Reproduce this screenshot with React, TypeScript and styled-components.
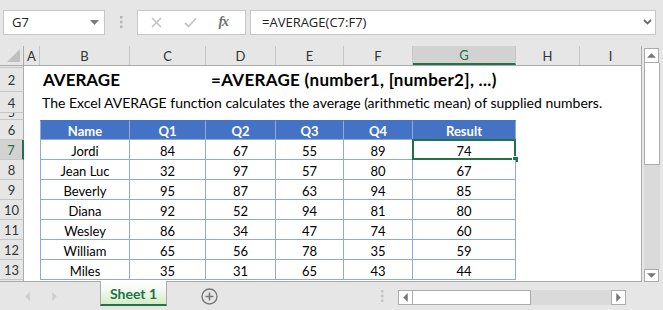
import styled, { createGlobalStyle } from "styled-components";

const GlobalStyle = createGlobalStyle`
  html, body {
    margin: 0;
    padding: 0;
    background: #e6e6e6;
  }
`;

const COLS = "24px 16px 90px 76px 70px 68px 69px 103px 64px 62px";
const LETTERS = ["A", "B", "C", "D", "E", "F", "G", "H", "I"];
const SHEET_FONT = `Lato, "Open Sans", sans-serif`;
const UI_FONT = `"Open Sans", "Noto Sans", sans-serif`;

const data = [
  { row: 7, name: "Jordi", q: [84, 67, 55, 89], res: 74 },
  { row: 8, name: "Jean Luc", q: [32, 97, 57, 80], res: 67 },
  { row: 9, name: "Beverly", q: [95, 87, 63, 94], res: 85 },
  { row: 10, name: "Diana", q: [92, 52, 94, 81], res: 80 },
  { row: 11, name: "Wesley", q: [86, 34, 47, 74], res: 60 },
  { row: 12, name: "William", q: [65, 56, 78, 35], res: 59 },
  { row: 13, name: "Miles", q: [35, 31, 65, 43], res: 44 },
];

const Window = styled.div`
  width: 663px;
  height: 310px;
  display: flex;
  flex-direction: column;
  background: #e6e6e6;
  overflow: hidden;
`;

/* formula bar */

const FormulaBar = styled.div`
  height: 46px;
  display: flex;
  align-items: center;
  padding: 0 7px 2px 3px;
  box-sizing: border-box;
  font-family: ${UI_FONT};
  font-size: 13px;
  color: #222;
`;

const InputBox = styled.div<{ $w?: number }>`
  height: 25px;
  box-sizing: border-box;
  background: #fff;
  border: 1px solid #c6c6c6;
  display: flex;
  align-items: center;
  ${(p) => (p.$w ? `width: ${p.$w}px;` : "flex: 1;")}
`;

const NameText = styled.span`
  flex: 1;
  padding-left: 8px;
`;

const Dots = styled.div`
  width: 32px;
  display: flex;
  justify-content: center;
`;

const FxGroup = styled.div`
  flex: 1;
  display: flex;
  justify-content: space-around;
  align-items: center;
  padding: 0 6px 0 2px;
`;

const Fx = styled.span`
  font-family: "Liberation Serif", serif;
  font-style: italic;
  font-weight: bold;
  font-size: 14px;
  color: #6f6f6f;
  letter-spacing: -1px;
`;

const FormulaText = styled.span`
  flex: 1;
  padding-left: 11px;
`;

const Gap = styled.div<{ $w: number }>`
  width: ${(p) => p.$w}px;
  flex: none;
`;

/* sheet grid */

const SheetArea = styled.div`
  display: flex;
  height: 236px;
`;

const Grid = styled.div`
  width: 642px;
  display: flex;
  flex-direction: column;
  background: #fff;
  border-right: 1px solid #ababab;
  border-bottom: 1px solid #ababab;
  box-sizing: border-box;
  font-family: ${SHEET_FONT};
  font-size: 13px;
  color: #000;
  overflow: hidden;
`;

const Row = styled.div<{ $h: number }>`
  display: grid;
  grid-template-columns: ${COLS};
  height: ${(p) => p.$h}px;
  flex: none;
`;

const HeaderRow = styled(Row)`
  background: #e6e6e6;
  border-bottom: 1px solid #ababab;
  box-sizing: border-box;
`;

const Corner = styled.div`
  border-right: 1px solid #ababab;
  display: flex;
  align-items: flex-end;
  justify-content: flex-end;
  padding: 0 3px 3px 0;
`;

const ColHead = styled.div<{ $active?: boolean }>`
  display: flex;
  align-items: center;
  justify-content: center;
  color: ${(p) => (p.$active ? "#217346" : "#333")};
  background: ${(p) => (p.$active ? "#d2d2d2" : "transparent")};
  border-right: 1px solid #c6c6c6;
  border-bottom: ${(p) => (p.$active ? "2px solid #217346" : "none")};
  box-sizing: border-box;
  padding-top: 1px;
`;

const RowHead = styled.div<{ $active?: boolean; $clip?: boolean }>`
  display: flex;
  align-items: ${(p) => (p.$clip ? "flex-end" : "center")};
  justify-content: center;
  overflow: hidden;
  line-height: ${(p) => (p.$clip ? "12px" : "normal")};
  font-size: ${(p) => (p.$clip ? "12px" : "13px")};
  background: ${(p) => (p.$active ? "#d2d2d2" : "#e6e6e6")};
  color: ${(p) => (p.$active ? "#217346" : "#333")};
  border-bottom: 1px solid #c6c6c6;
  border-right: ${(p) => (p.$active ? "2px solid #217346" : "1px solid #ababab")};
  box-sizing: border-box;
  padding-top: ${(p) => (p.$clip ? "0" : "1px")};
`;

const Blank = styled.div<{ $span?: number }>`
  grid-column: span ${(p) => p.$span ?? 1};
`;

const Title = styled.div<{ $span: number; $wide?: boolean }>`
  grid-column: span ${(p) => p.$span};
  font-size: 17px;
  font-weight: bold;
  line-height: 24px;
  padding-left: ${(p) => (p.$wide ? "5px" : "3px")};
  letter-spacing: ${(p) => (p.$wide ? "0.3px" : "0")};
  white-space: nowrap;
`;

const Description = styled.div<{ $span: number }>`
  grid-column: span ${(p) => p.$span};
  font-size: 14px;
  line-height: 21px;
  padding-left: 2px;
  white-space: nowrap;
`;

const TCell = styled.div<{ $head?: boolean; $first?: boolean }>`
  position: relative;
  display: flex;
  align-items: center;
  justify-content: center;
  padding-top: 2px;
  box-sizing: border-box;
  font-weight: ${(p) => (p.$head ? "bold" : "normal")};
  color: ${(p) => (p.$head ? "#fff" : "#000")};
  background: ${(p) => (p.$head ? "#4472c4" : "#fff")};
  border-right: 1px solid ${(p) => (p.$head ? "#8eaadb" : "#8ea9db")};
  border-bottom: 1px solid #8ea9db;
  border-top: ${(p) => (p.$head ? "1px solid #4472c4" : "none")};
  border-left: ${(p) => (p.$first ? "1px solid #8ea9db" : "none")};
`;

const Selection = styled.div`
  position: absolute;
  left: -1px;
  top: -1px;
  right: -1px;
  bottom: -1px;
  border: 2px solid #217346;
  pointer-events: none;
`;

const FillHandle = styled.div`
  position: absolute;
  right: -5px;
  bottom: -5px;
  width: 5px;
  height: 5px;
  background: #217346;
  border: 1px solid #fff;
`;

/* vertical scrollbar */

const VScroll = styled.div`
  width: 21px;
  display: flex;
  flex-direction: column;
  padding: 2px 3px 0 2px;
  box-sizing: border-box;
`;

const ScrollBtn = styled.div<{ $w?: number; $h?: number }>`
  width: ${(p) => p.$w ?? 15}px;
  height: ${(p) => p.$h ?? 15}px;
  flex: none;
  box-sizing: border-box;
  background: #fff;
  border: 1px solid #ababab;
  display: flex;
  align-items: center;
  justify-content: center;
`;

const VThumb = styled.div`
  height: 102px;
  flex: none;
  background: #fff;
  border: 1px solid #ababab;
  border-top: none;
  box-sizing: border-box;
`;

const VTrack = styled.div`
  flex: 1;
  background: #dadada;
`;

/* bottom bar */

const BottomBar = styled.div`
  flex: 1;
  display: flex;
  align-items: flex-start;
  font-family: ${SHEET_FONT};
`;

const NavArrows = styled.div`
  width: 100px;
  height: 28px;
  display: flex;
  align-items: center;
  padding-left: 25px;
  gap: 22px;
  box-sizing: border-box;
`;

const SheetTab = styled.div`
  width: 67px;
  height: 25px;
  margin-top: -1px;
  box-sizing: border-box;
  border-left: 1px solid #ababab;
  border-right: 1px solid #ababab;
  border-bottom: 2px solid #217346;
  background: linear-gradient(#ffffff, #f2f9ef 40%, #d3ecc8);
  color: #217346;
  font-weight: bold;
  font-size: 14px;
  display: flex;
  align-items: center;
  justify-content: center;
  padding-top: 1px;
`;

const AddSheet = styled.div`
  width: 84px;
  height: 28px;
  display: flex;
  align-items: center;
  justify-content: center;
`;

const HScrollDots = styled.div`
  width: 147px;
  height: 28px;
  display: flex;
  align-items: center;
  justify-content: flex-end;
  padding-right: 14px;
  box-sizing: border-box;
`;

const HScroll = styled.div`
  width: 228px;
  height: 15px;
  margin-top: 8px;
  display: flex;
  background: #dadada;
`;

const HThumb = styled.div`
  width: 118px;
  height: 15px;
  background: #fff;
  border: 1px solid #ababab;
  border-left: none;
  box-sizing: border-box;
`;

const HTrack = styled.div`
  flex: 1;
`;

const Tri = ({ dir, color = "#777" }: { dir: "up" | "down" | "left" | "right"; color?: string }) => {
  const pts = {
    up: "0,5 5,0 10,5",
    down: "0,0 10,0 5,5",
    left: "5,0 5,10 0,5",
    right: "0,0 0,10 5,5",
  }[dir];
  const vert = dir === "up" || dir === "down";
  return (
    <svg width={vert ? 9 : 5} height={vert ? 5 : 9} viewBox={vert ? "0 0 10 5" : "0 0 5 10"}>
      <polygon points={pts} fill={color} />
    </svg>
  );
};

const VDots = ({ color = "#b4b4b4" }: { color?: string }) => (
  <svg width="3" height="12" viewBox="0 0 3 12">
    <rect x="0" y="0" width="2.5" height="2.5" fill={color} />
    <rect x="0" y="4.75" width="2.5" height="2.5" fill={color} />
    <rect x="0" y="9.5" width="2.5" height="2.5" fill={color} />
  </svg>
);

const App = () => {
  return (
    <Window>
      <GlobalStyle />
      <FormulaBar>
        <InputBox $w={102}>
          <NameText>G7</NameText>
          <svg width="9" height="5" viewBox="0 0 9 5" style={{ marginRight: 5 }}>
            <polygon points="0,0 9,0 4.5,5" fill="#7b7b7b" />
          </svg>
        </InputBox>
        <Dots>
          <VDots />
        </Dots>
        <InputBox $w={109}>
          <FxGroup>
            <svg width="11" height="11" viewBox="0 0 11 11">
              <path d="M1 1 L10 10 M10 1 L1 10" stroke="#c4c4c4" strokeWidth="1.6" />
            </svg>
            <svg width="13" height="11" viewBox="0 0 13 11">
              <path d="M1 6 L4.5 9.5 L12 1.5" stroke="#c4c4c4" strokeWidth="1.8" fill="none" />
            </svg>
            <Fx>fx</Fx>
          </FxGroup>
        </InputBox>
        <Gap $w={4} />
        <InputBox>
          <FormulaText>=AVERAGE(C7:F7)</FormulaText>
          <svg width="9" height="6" viewBox="0 0 9 6" style={{ marginRight: 3 }}>
            <path d="M1 1 L4.5 4.5 L8 1" stroke="#6b6b6b" strokeWidth="1.8" fill="none" />
          </svg>
        </InputBox>
      </FormulaBar>

      <SheetArea>
        <Grid>
          <HeaderRow $h={20}>
            <Corner>
              <svg width="13" height="13" viewBox="0 0 13 13">
                <polygon points="13,0 13,13 0,13" fill="#bfbfbf" />
              </svg>
            </Corner>
            {LETTERS.map((l) => (
              <ColHead key={l} $active={l === "G"}>
                {l}
              </ColHead>
            ))}
          </HeaderRow>

          <Row $h={2}>
            <RowHead />
            <Blank $span={9} />
          </Row>

          <Row $h={24}>
            <RowHead>2</RowHead>
            <Blank />
            <Title $span={2}>AVERAGE</Title>
            <Title $span={6} $wide>
              =AVERAGE (number1, [number2], ...)
            </Title>
          </Row>

          <Row $h={21}>
            <RowHead>4</RowHead>
            <Blank />
            <Description $span={8}>
              The Excel AVERAGE function calculates the average (arithmetic mean) of supplied numbers.
            </Description>
          </Row>

          <Row $h={7}>
            <RowHead $clip>5</RowHead>
            <Blank $span={9} />
          </Row>

          <Row $h={20}>
            <RowHead>6</RowHead>
            <Blank />
            {["Name", "Q1", "Q2", "Q3", "Q4", "Result"].map((h, i) => (
              <TCell key={h} $head $first={i === 0}>
                {h}
              </TCell>
            ))}
            <Blank $span={2} />
          </Row>

          {data.map((d) => (
            <Row $h={20} key={d.row}>
              <RowHead $active={d.row === 7}>{d.row}</RowHead>
              <Blank />
              <TCell $first>{d.name}</TCell>
              {d.q.map((v, i) => (
                <TCell key={i}>{v}</TCell>
              ))}
              <TCell>
                {d.res}
                {d.row === 7 && (
                  <Selection>
                    <FillHandle />
                  </Selection>
                )}
              </TCell>
              <Blank $span={2} />
            </Row>
          ))}

          <Row $h={4}>
            <RowHead />
            <Blank $span={9} />
          </Row>
        </Grid>

        <VScroll>
          <ScrollBtn>
            <Tri dir="up" />
          </ScrollBtn>
          <VThumb />
          <VTrack />
          <ScrollBtn $h={13}>
            <Tri dir="down" />
          </ScrollBtn>
        </VScroll>
      </SheetArea>

      <BottomBar>
        <NavArrows>
          <Tri dir="left" color="#cdcdcd" />
          <Tri dir="right" color="#cdcdcd" />
        </NavArrows>
        <SheetTab>Sheet 1</SheetTab>
        <AddSheet>
          <svg width="17" height="17" viewBox="0 0 17 17">
            <circle cx="8.5" cy="8.5" r="7.5" stroke="#777" strokeWidth="1.4" fill="none" />
            <path d="M8.5 4.5 V12.5 M4.5 8.5 H12.5" stroke="#777" strokeWidth="1.6" />
          </svg>
        </AddSheet>
        <HScrollDots>
          <VDots color="#c2c2c2" />
        </HScrollDots>
        <HScroll>
          <ScrollBtn>
            <Tri dir="left" />
          </ScrollBtn>
          <HThumb />
          <HTrack />
          <ScrollBtn>
            <Tri dir="right" />
          </ScrollBtn>
        </HScroll>
      </BottomBar>
    </Window>
  );
};

export default App;
